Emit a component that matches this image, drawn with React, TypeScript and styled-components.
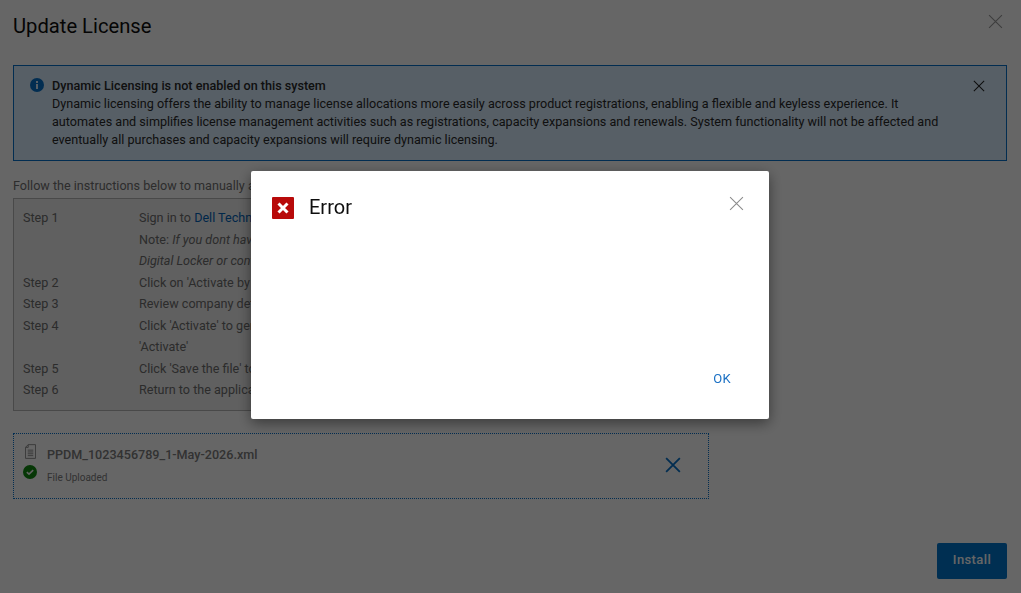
import React from "react";
import styled, { createGlobalStyle } from "styled-components";

const Global = createGlobalStyle`
  html, body { margin: 0; padding: 0; height: 100%; background: #fff; }
  body { font-family: Roboto, "Liberation Sans", sans-serif; overflow: hidden; }
  #root { height: 100%; }
`;

const Page = styled.div`
  width: 1021px;
  height: 593px;
  padding: 0 14px 14px 13px;
  box-sizing: border-box;
  display: flex;
  flex-direction: column;
  color: #333;
  background: #fff;
`;

const Header = styled.header`
  height: 65px;
  display: flex;
  align-items: flex-start;
  justify-content: space-between;
`;

const Title = styled.h1`
  margin: 14px 0 0;
  font-size: 20.2px;
  line-height: 24px;
  font-weight: 400;
  color: #0e0e0e;
`;

const IconButton = styled.button<{ $size: number; $color: string; $weight?: number }>`
  border: 0;
  padding: 0;
  background: none;
  width: ${(p) => p.$size}px;
  height: ${(p) => p.$size}px;
  color: ${(p) => p.$color};
  display: block;
  flex: none;
  svg {
    display: block;
    width: 100%;
    height: 100%;
    fill: none;
    stroke: currentColor;
    stroke-width: ${(p) => p.$weight ?? 1};
  }
`;

const PageClose = styled(IconButton)`
  margin: 14px 4px 0 0;
`;

const Alert = styled.section`
  height: 96px;
  box-sizing: border-box;
  border: 1px solid #0672cb;
  background: #d9edff;
  padding: 11px 21px 0 16px;
  display: flex;
  gap: 8px;
  font-size: 12.6px;
  line-height: 18px;
  color: #2a2a2a;
`;

const AlertIcon = styled.svg`
  width: 14px;
  height: 14px;
  margin-top: 1px;
  flex: none;
`;

const AlertBody = styled.div`
  flex: 1;
  max-width: 900px;
`;

const AlertHeading = styled.strong`
  display: block;
  font-weight: 500;
`;

const AlertClose = styled(IconButton)`
  margin: 3px 0 0 auto;
`;

const Intro = styled.p`
  margin: 16px 0 3px;
  font-size: 12.6px;
  line-height: 18px;
  color: #707070;
`;

const Steps = styled.ol`
  list-style: none;
  width: 696px;
  height: 213px;
  box-sizing: border-box;
  margin: 0;
  padding: 8px 9px;
  border: 1px solid #b6b6b6;
  background: #f0f0f0;
  font-size: 12.6px;
  line-height: 21.5px;
  color: #6e6e6e;
`;

const Step = styled.li`
  display: grid;
  grid-template-columns: 116px 1fr;
  white-space: nowrap;
  overflow: hidden;
`;

const StepLink = styled.a`
  color: #0063b8;
`;

const Upload = styled.div`
  width: 696px;
  height: 66px;
  box-sizing: border-box;
  margin-top: 22px;
  border: 1px dotted #0672cb;
  padding: 10px 27px 0 9px;
  display: flex;
`;

const UploadIcons = styled.div`
  width: 24px;
  display: flex;
  flex-direction: column;
  gap: 6px;
  flex: none;
`;

const DocIcon = styled.svg`
  width: 11px;
  height: 15px;
  margin-left: 2px;
`;

const CheckIcon = styled.svg`
  width: 14px;
  height: 14px;
`;

const UploadText = styled.div`
  flex: 1;
  padding-top: 3px;
`;

const FileName = styled.div`
  font-size: 12.6px;
  line-height: 16px;
  font-weight: 500;
  color: #7d7d7d;
`;

const FileStatus = styled.div`
  margin-top: 8px;
  font-size: 10px;
  line-height: 13px;
  color: #7d7d7d;
`;

const UploadClose = styled(IconButton)`
  margin-top: 13px;
`;

const Footer = styled.footer`
  margin-top: auto;
  display: flex;
  justify-content: flex-end;
`;

const Install = styled.button`
  width: 70px;
  height: 36px;
  border: 0;
  padding: 0 0 3px;
  border-radius: 2px;
  background: #0076ce;
  color: #fff;
  font: 500 13px Roboto, sans-serif;
  letter-spacing: 0.4px;
`;

const Overlay = styled.div`
  position: fixed;
  inset: 0;
  background: rgba(0, 0, 0, 0.6);
`;

const Dialog = styled.div`
  position: fixed;
  left: 251px;
  top: 171px;
  width: 518px;
  height: 248px;
  box-sizing: border-box;
  padding: 25px 21px 0;
  background: #fff;
  border-radius: 2px;
  box-shadow: 0 4px 14px rgba(0, 0, 0, 0.45);
  display: flex;
  flex-direction: column;
`;

const DialogHead = styled.div`
  display: flex;
  align-items: center;
  gap: 15px;
`;

const ErrorBadge = styled.svg`
  width: 22px;
  height: 22px;
  flex: none;
`;

const DialogTitle = styled.h2`
  margin: 0;
  font-size: 20px;
  line-height: 23px;
  font-weight: 400;
  color: #0e0e0e;
`;

const DialogClose = styled(IconButton)`
  margin: -9px 4px 0 auto;
`;

const DialogFoot = styled.div`
  margin-top: auto;
  padding: 0 0 30px;
  display: flex;
  justify-content: flex-end;
`;

const OkButton = styled.button`
  border: 0;
  background: none;
  padding: 0 17px 0 0;
  color: #1a70c4;
  font: 400 13px/20px Roboto, sans-serif;
  letter-spacing: 0.3px;
`;

const Cross = () => (
  <svg viewBox="0 0 14 14">
    <path d="M1 1 13 13M13 1 1 13" />
  </svg>
);

export default function App() {
  return (
    <>
      <Global />
      <Page>
        <Header>
          <Title>Update License</Title>
          <PageClose $size={15} $color="#999" aria-label="Close">
            <Cross />
          </PageClose>
        </Header>
        <Alert>
          <AlertIcon viewBox="0 0 14 14">
            <circle cx="7" cy="7" r="7" fill="#0672cb" />
            <rect x="6" y="6" width="2" height="5" fill="#d9edff" />
            <rect x="6" y="3" width="2" height="2" fill="#d9edff" />
          </AlertIcon>
          <AlertBody>
            <AlertHeading>Dynamic Licensing is not enabled on this system</AlertHeading>
            Dynamic licensing offers the ability to manage license allocations more easily across product registrations, enabling a flexible and keyless experience. It automates and simplifies license management activities such as registrations, capacity expansions and renewals. System functionality will not be affected and eventually all purchases and capacity expansions will require dynamic licensing.
          </AlertBody>
          <AlertClose $size={12} $color="#222" $weight={1.2} aria-label="Dismiss">
            <Cross />
          </AlertClose>
        </Alert>
        <Intro>Follow the instructions below to manually activate your license</Intro>
        <Steps>
          <Step><span>Step 1</span><span>Sign in to <StepLink>Dell Technologies Software Licensing Central</StepLink></span></Step>
          <Step><span /><span>Note: <em>If you dont have an account, register using the link in your</em></span></Step>
          <Step><span /><span><em>Digital Locker or contact support</em></span></Step>
          <Step><span>Step 2</span><span>Click on 'Activate by Product' and select the product</span></Step>
          <Step><span>Step 3</span><span>Review company details and continue</span></Step>
          <Step><span>Step 4</span><span>Click 'Activate' to generate the license file, then click</span></Step>
          <Step><span /><span>'Activate'</span></Step>
          <Step><span>Step 5</span><span>Click 'Save the file' to download the license file</span></Step>
          <Step><span>Step 6</span><span>Return to the application and upload the file below</span></Step>
        </Steps>
        <Upload>
          <UploadIcons>
            <DocIcon viewBox="0 0 12 16" fill="none" stroke="#8a8a8a" strokeWidth="1">
              <path d="M3.5.5H11.5V15.5H.5V3.5ZM3.5.5V3.5H.5M3 6.5H9M3 8.5H9M3 10.5H9M3 12.5H9" />
            </DocIcon>
            <CheckIcon viewBox="0 0 14 14">
              <circle cx="7" cy="7" r="7" fill="#0f8a0f" />
              <path d="M3.8 7.2 6 9.2 10.2 5.2" fill="none" stroke="#f4f4f4" strokeWidth="1.6" />
            </CheckIcon>
          </UploadIcons>
          <UploadText>
            <FileName>PPDM_1023456789_1-May-2026.xml</FileName>
            <FileStatus>File Uploaded</FileStatus>
          </UploadText>
          <UploadClose $size={16} $color="#0672cb" $weight={1.6} aria-label="Remove file">
            <Cross />
          </UploadClose>
        </Upload>
        <Footer>
          <Install>Install</Install>
        </Footer>
      </Page>
      <Overlay />
      <Dialog role="dialog">
        <DialogHead>
          <ErrorBadge viewBox="0 0 22 22">
            <rect width="22" height="22" rx="1" fill="#b80a0a" />
            <path d="M6.5 6.5 15.5 15.5M15.5 6.5 6.5 15.5" stroke="#fff" strokeWidth="3" />
          </ErrorBadge>
          <DialogTitle>Error</DialogTitle>
          <DialogClose $size={15} $color="#8c8c8c" aria-label="Close">
            <Cross />
          </DialogClose>
        </DialogHead>
        <DialogFoot>
          <OkButton>OK</OkButton>
        </DialogFoot>
      </Dialog>
    </>
  );
}
